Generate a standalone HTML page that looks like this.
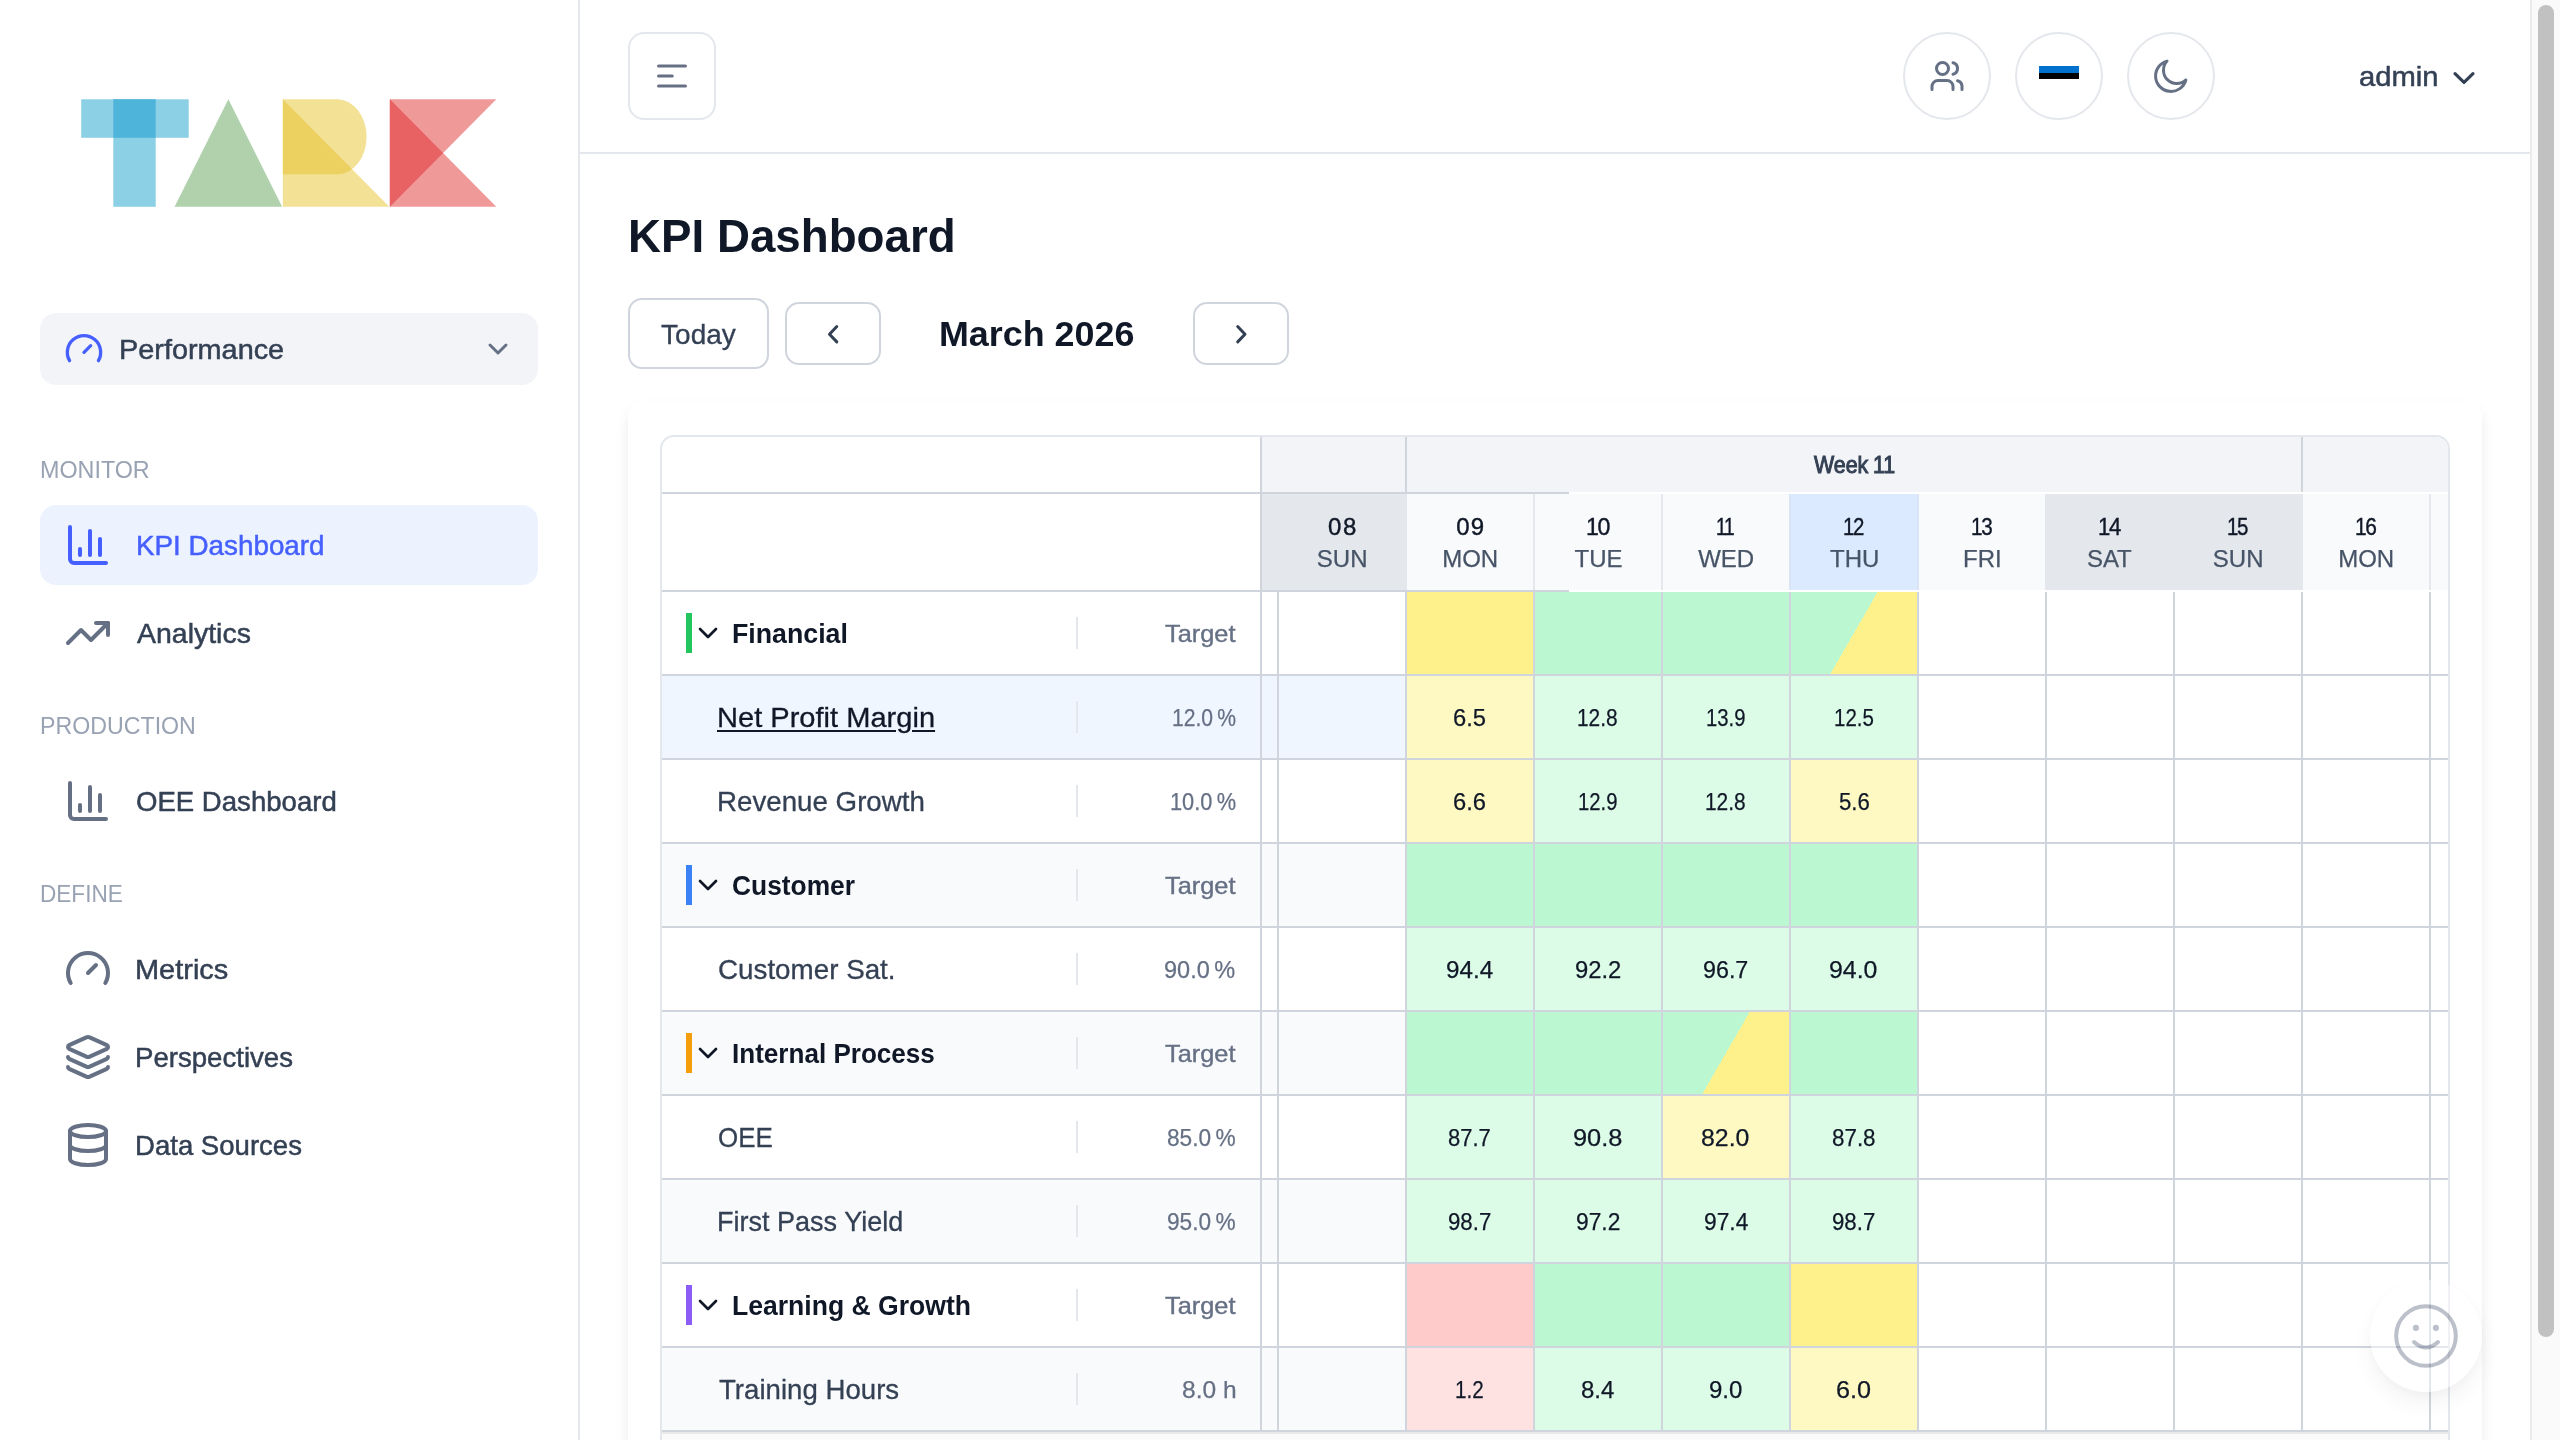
<!DOCTYPE html>
<html lang="en"><head><meta charset="utf-8"><title>KPI Dashboard</title>
<style>
html,body{margin:0;padding:0;}
body{width:2560px;height:1440px;overflow:hidden;background:#fff;position:relative;font-family:"Liberation Sans", sans-serif;}
.t{position:absolute;white-space:nowrap;line-height:1;font-family:"Liberation Sans", sans-serif;transform-origin:0 0;}
</style></head><body><div id="root" style="position:absolute;left:0;top:0;width:2560px;height:1440px;will-change:transform;">
<div style="position:absolute;left:578px;top:0px;width:2px;height:1440px;background:#e4e7ec;"></div>
<svg style="position:absolute;left:0;top:0" width="578" height="300" viewBox="0 0 578 300">
<g>
<rect x="81.2" y="99.3" width="107.5" height="38.5" fill="#8cd0e6"/>
<rect x="113.3" y="99.3" width="42.4" height="107.5" fill="#8cd0e6"/>
<rect x="113.3" y="99.3" width="42.4" height="38.5" fill="#4fb4da"/>
<polygon points="228.4,99.3 282.1,206.8 174.6,206.8" fill="#b1d1ad"/>
<path d="M282.8,99.3 H337.3 A29.3,37.5 0 0 1 337.3,174.3 H282.8 Z" fill="#f3e196"/>
<polygon points="282.8,99.3 389.3,206.8 282.8,206.8" fill="#f3e196"/>
<clipPath id="dclip"><path d="M282.8,99.3 H337.3 A29.3,37.5 0 0 1 337.3,174.3 H282.8 Z"/></clipPath>
<polygon points="282.8,99.3 389.3,206.8 282.8,206.8" fill="#ecd060" clip-path="url(#dclip)"/>
<polygon points="389.9,99.3 496.3,99.3 389.9,206.8" fill="#f09999"/>
<polygon points="389.9,99.3 496.3,206.8 389.9,206.8" fill="#f09999"/>
<polygon points="389.9,99.3 443.1,153.05 389.9,206.8" fill="#e86163"/>
</g></svg>
<div style="position:absolute;left:40px;top:313px;width:498px;height:72px;background:#f3f4f8;border-radius:16px;"></div>
<svg style="position:absolute;left:64px;top:329px;" width="40" height="40" viewBox="0 0 24 24" fill="none" stroke="#465fff" stroke-width="2" stroke-linecap="round" stroke-linejoin="round"><path d="m12 14 4-4"/><path d="M3.34 19a10 10 0 1 1 17.32 0"/></svg>
<svg style="position:absolute;left:482px;top:333px;" width="32" height="32" viewBox="0 0 24 24" fill="none" stroke="#667085" stroke-width="2.2" stroke-linecap="round" stroke-linejoin="round"><path d="m6 9 6 6 6-6"/></svg>
<div style="position:absolute;left:40px;top:505px;width:498px;height:80px;background:#ecf3ff;border-radius:16px;"></div>
<svg style="position:absolute;left:64px;top:521px;" width="48" height="48" viewBox="0 0 24 24" fill="none" stroke="#465fff" stroke-width="2" stroke-linecap="round" stroke-linejoin="round"><path d="M3 3v16a2 2 0 0 0 2 2h16"/><path d="M18 17V9"/><path d="M13 17V5"/><path d="M8 17v-3"/></svg>
<svg style="position:absolute;left:64px;top:609px;" width="48" height="48" viewBox="0 0 24 24" fill="none" stroke="#667085" stroke-width="2" stroke-linecap="round" stroke-linejoin="round"><polyline points="22 7 13.5 15.5 8.5 10.5 2 17"/><polyline points="16 7 22 7 22 13"/></svg>
<svg style="position:absolute;left:64px;top:777px;" width="48" height="48" viewBox="0 0 24 24" fill="none" stroke="#667085" stroke-width="2" stroke-linecap="round" stroke-linejoin="round"><path d="M3 3v16a2 2 0 0 0 2 2h16"/><path d="M18 17V9"/><path d="M13 17V5"/><path d="M8 17v-3"/></svg>
<svg style="position:absolute;left:64px;top:945px;" width="48" height="48" viewBox="0 0 24 24" fill="none" stroke="#667085" stroke-width="2" stroke-linecap="round" stroke-linejoin="round"><path d="m12 14 4-4"/><path d="M3.34 19a10 10 0 1 1 17.32 0"/></svg>
<svg style="position:absolute;left:64px;top:1033px;" width="48" height="48" viewBox="0 0 24 24" fill="none" stroke="#667085" stroke-width="2" stroke-linecap="round" stroke-linejoin="round"><path d="M12.83 2.18a2 2 0 0 0-1.66 0L2.6 6.08a1 1 0 0 0 0 1.83l8.58 3.91a2 2 0 0 0 1.66 0l8.58-3.9a1 1 0 0 0 0-1.83z"/><path d="M2 12a1 1 0 0 0 .58.91l8.6 3.91a2 2 0 0 0 1.65 0l8.58-3.9A1 1 0 0 0 22 12"/><path d="M2 17a1 1 0 0 0 .58.91l8.6 3.91a2 2 0 0 0 1.65 0l8.58-3.9A1 1 0 0 0 22 17"/></svg>
<svg style="position:absolute;left:64px;top:1121px;" width="48" height="48" viewBox="0 0 24 24" fill="none" stroke="#667085" stroke-width="2" stroke-linecap="round" stroke-linejoin="round"><ellipse cx="12" cy="5" rx="9" ry="3"/><path d="M3 5V19A9 3 0 0 0 21 19V5"/><path d="M3 12A9 3 0 0 0 21 12"/></svg>
<div style="position:absolute;left:580px;top:152px;width:1950px;height:2px;background:#e4e7ec;"></div>
<div style="position:absolute;left:628px;top:32px;width:88px;height:88px;background:#fff;box-sizing:border-box;border:2px solid #e4e7ec;border-radius:16px;"></div>
<svg style="position:absolute;left:628px;top:32px" width="88" height="88" viewBox="628 32 88 88" fill="none" stroke="#667085" stroke-width="3.2" stroke-linecap="round"><path d="M658.6 66H685.4M658.6 76H672.2M658.6 86H685.4"/></svg>
<div style="position:absolute;left:1903px;top:32px;width:88px;height:88px;background:#fff;box-sizing:border-box;border:2px solid #e4e7ec;border-radius:50%;"></div>
<div style="position:absolute;left:2015px;top:32px;width:88px;height:88px;background:#fff;box-sizing:border-box;border:2px solid #e4e7ec;border-radius:50%;"></div>
<div style="position:absolute;left:2127px;top:32px;width:88px;height:88px;background:#fff;box-sizing:border-box;border:2px solid #e4e7ec;border-radius:50%;"></div>
<svg style="position:absolute;left:1929px;top:58px;" width="36" height="36" viewBox="0 0 24 24" fill="none" stroke="#667085" stroke-width="2" stroke-linecap="round" stroke-linejoin="round"><path d="M16 21v-2a4 4 0 0 0-4-4H6a4 4 0 0 0-4 4v2"/><circle cx="9" cy="7" r="4"/><path d="M22 21v-2a4 4 0 0 0-3-3.870"/><path d="M16 3.13a4 4 0 0 1 0 7.75"/></svg>
<div style="position:absolute;left:2039px;top:66px;width:40px;height:6.67px;background:#0072ce;"></div>
<div style="position:absolute;left:2039px;top:72.67px;width:40px;height:6.66px;background:#000;"></div>
<svg style="position:absolute;left:2151px;top:56px" width="40" height="40" viewBox="0 0 20 20" fill="none" stroke="#667085" stroke-width="1.5" stroke-linejoin="round"><path d="M8.0306 2.5459A7.708 7.708 0 1 0 17.4547 11.97A6.668 6.668 0 0 1 8.0306 2.5459Z"/></svg>
<svg style="position:absolute;left:2440px;top:60px" width="48" height="36" viewBox="2440 60 48 36" fill="none" stroke="#344054" stroke-width="3.2" stroke-linecap="round" stroke-linejoin="round"><path d="M2455 73.6L2464 82.4L2473 73.6"/></svg>
<div style="position:absolute;left:628px;top:298px;width:141px;height:71px;background:#fff;box-sizing:border-box;border:2px solid #d0d5dd;border-radius:14px;"></div>
<div style="position:absolute;left:785px;top:302px;width:96px;height:63px;background:#fff;box-sizing:border-box;border:2px solid #d0d5dd;border-radius:14px;"></div>
<div style="position:absolute;left:1193px;top:302px;width:96px;height:63px;background:#fff;box-sizing:border-box;border:2px solid #d0d5dd;border-radius:14px;"></div>
<svg style="position:absolute;left:785px;top:302px" width="96" height="63" viewBox="785 302 96 63" fill="none" stroke="#344054" stroke-width="3" stroke-linecap="round" stroke-linejoin="round"><path d="M836.8 326.5L829.5 334.2L836.8 341.9"/></svg>
<svg style="position:absolute;left:1193px;top:302px" width="96" height="63" viewBox="1193 302 96 63" fill="none" stroke="#344054" stroke-width="3" stroke-linecap="round" stroke-linejoin="round"><path d="M1237.7 326.5L1245 334.2L1237.7 341.9"/></svg>
<div style="position:absolute;left:628px;top:401px;width:1854px;height:1100px;background:#fff;border-radius:16px;box-shadow:0 8px 16px -2px rgba(16,24,40,.10),0 4px 6px -2px rgba(16,24,40,.04);"></div>
<div style="position:absolute;left:660px;top:435px;width:1790px;height:1040px;box-sizing:border-box;border:2px solid #e4e7ec;border-radius:14px 14px 0 0;overflow:hidden;background:#fff;"><div style="position:absolute;left:-2px;top:-2px;width:1790px;height:1040px;"><div style="position:absolute;left:602px;top:2px;width:1186px;height:55px;background:#f2f4f7;"></div>
<div style="position:absolute;left:602px;top:59px;width:15px;height:96px;background:#e4e7ec;"></div>
<div style="position:absolute;left:617px;top:59px;width:2px;height:96px;background:#e4e7ec;"></div>
<div style="position:absolute;left:619px;top:59px;width:126px;height:96px;background:#e4e7ec;"></div>
<div style="position:absolute;left:745px;top:59px;width:2px;height:96px;background:#e4e7ec;"></div>
<div style="position:absolute;left:747px;top:59px;width:126px;height:96px;background:#f9fafb;"></div>
<div style="position:absolute;left:873px;top:59px;width:2px;height:96px;background:#e4e7ec;"></div>
<div style="position:absolute;left:875px;top:59px;width:126px;height:96px;background:#f9fafb;"></div>
<div style="position:absolute;left:1001px;top:59px;width:2px;height:96px;background:#e4e7ec;"></div>
<div style="position:absolute;left:1003px;top:59px;width:126px;height:96px;background:#f9fafb;"></div>
<div style="position:absolute;left:1129px;top:59px;width:2px;height:96px;background:#d9e4f6;"></div>
<div style="position:absolute;left:1131px;top:59px;width:126px;height:96px;background:#dbeafe;"></div>
<div style="position:absolute;left:1257px;top:59px;width:2px;height:96px;background:#d9e4f6;"></div>
<div style="position:absolute;left:1259px;top:59px;width:126px;height:96px;background:#f9fafb;"></div>
<div style="position:absolute;left:1385px;top:59px;width:2px;height:96px;background:#e4e7ec;"></div>
<div style="position:absolute;left:1387px;top:59px;width:126px;height:96px;background:#e4e7ec;"></div>
<div style="position:absolute;left:1513px;top:59px;width:2px;height:96px;background:#e4e7ec;"></div>
<div style="position:absolute;left:1515px;top:59px;width:126px;height:96px;background:#e4e7ec;"></div>
<div style="position:absolute;left:1641px;top:59px;width:2px;height:96px;background:#e4e7ec;"></div>
<div style="position:absolute;left:1643px;top:59px;width:126px;height:96px;background:#f9fafb;"></div>
<div style="position:absolute;left:1769px;top:59px;width:2px;height:96px;background:#e4e7ec;"></div>
<div style="position:absolute;left:1771px;top:59px;width:126px;height:96px;background:#f9fafb;"></div>
<div style="position:absolute;left:1897px;top:59px;width:2px;height:96px;background:#e4e7ec;"></div>
<div style="position:absolute;left:2px;top:57px;width:907px;height:2px;background:#d0d5dd;"></div>
<div style="position:absolute;left:909px;top:57px;width:879px;height:2px;background:#fff;"></div>
<div style="position:absolute;left:2px;top:155px;width:907px;height:2px;background:#d0d5dd;"></div>
<div style="position:absolute;left:909px;top:155px;width:879px;height:2px;background:#fff;"></div>
<div style="position:absolute;left:745px;top:2px;width:2px;height:55px;background:#d0d5dd;"></div>
<div style="position:absolute;left:1641px;top:2px;width:2px;height:55px;background:#d0d5dd;"></div>
<div style="position:absolute;left:2px;top:157px;width:745px;height:82px;background:#fff;"></div>
<div style="position:absolute;left:747px;top:157px;width:126px;height:82px;background:#fef08a;"></div>
<div style="position:absolute;left:875px;top:157px;width:126px;height:82px;background:#bbf7d0;"></div>
<div style="position:absolute;left:1003px;top:157px;width:126px;height:82px;background:#bbf7d0;"></div>
<div style="position:absolute;left:1131px;top:157px;width:126px;height:82px;background:linear-gradient(120deg,#bbf7d0 50%,#fef08a 50%);"></div>
<div style="position:absolute;left:2px;top:239px;width:1786px;height:2px;background:#d0d5dd;"></div>
<div style="position:absolute;left:416px;top:182px;width:2px;height:32px;background:#e4e7ec;"></div>
<div style="position:absolute;left:26px;top:178px;width:6px;height:40px;background:#22c55e;"></div>
<div style="position:absolute;left:2px;top:241px;width:745px;height:82px;background:#eff6ff;"></div>
<div style="position:absolute;left:747px;top:241px;width:126px;height:82px;background:#fef9c3;"></div>
<div style="position:absolute;left:875px;top:241px;width:126px;height:82px;background:#dcfce7;"></div>
<div style="position:absolute;left:1003px;top:241px;width:126px;height:82px;background:#dcfce7;"></div>
<div style="position:absolute;left:1131px;top:241px;width:126px;height:82px;background:#dcfce7;"></div>
<div style="position:absolute;left:2px;top:323px;width:1786px;height:2px;background:#d0d5dd;"></div>
<div style="position:absolute;left:416px;top:266px;width:2px;height:32px;background:#e4e7ec;"></div>
<div style="position:absolute;left:2px;top:325px;width:745px;height:82px;background:#fff;"></div>
<div style="position:absolute;left:747px;top:325px;width:126px;height:82px;background:#fef9c3;"></div>
<div style="position:absolute;left:875px;top:325px;width:126px;height:82px;background:#dcfce7;"></div>
<div style="position:absolute;left:1003px;top:325px;width:126px;height:82px;background:#dcfce7;"></div>
<div style="position:absolute;left:1131px;top:325px;width:126px;height:82px;background:#fef9c3;"></div>
<div style="position:absolute;left:2px;top:407px;width:1786px;height:2px;background:#d0d5dd;"></div>
<div style="position:absolute;left:416px;top:350px;width:2px;height:32px;background:#e4e7ec;"></div>
<div style="position:absolute;left:2px;top:409px;width:745px;height:82px;background:#f9fafb;"></div>
<div style="position:absolute;left:747px;top:409px;width:126px;height:82px;background:#bbf7d0;"></div>
<div style="position:absolute;left:875px;top:409px;width:126px;height:82px;background:#bbf7d0;"></div>
<div style="position:absolute;left:1003px;top:409px;width:126px;height:82px;background:#bbf7d0;"></div>
<div style="position:absolute;left:1131px;top:409px;width:126px;height:82px;background:#bbf7d0;"></div>
<div style="position:absolute;left:2px;top:491px;width:1786px;height:2px;background:#d0d5dd;"></div>
<div style="position:absolute;left:416px;top:434px;width:2px;height:32px;background:#e4e7ec;"></div>
<div style="position:absolute;left:26px;top:430px;width:6px;height:40px;background:#3b82f6;"></div>
<div style="position:absolute;left:2px;top:493px;width:745px;height:82px;background:#fff;"></div>
<div style="position:absolute;left:747px;top:493px;width:126px;height:82px;background:#dcfce7;"></div>
<div style="position:absolute;left:875px;top:493px;width:126px;height:82px;background:#dcfce7;"></div>
<div style="position:absolute;left:1003px;top:493px;width:126px;height:82px;background:#dcfce7;"></div>
<div style="position:absolute;left:1131px;top:493px;width:126px;height:82px;background:#dcfce7;"></div>
<div style="position:absolute;left:2px;top:575px;width:1786px;height:2px;background:#d0d5dd;"></div>
<div style="position:absolute;left:416px;top:518px;width:2px;height:32px;background:#e4e7ec;"></div>
<div style="position:absolute;left:2px;top:577px;width:745px;height:82px;background:#f9fafb;"></div>
<div style="position:absolute;left:747px;top:577px;width:126px;height:82px;background:#bbf7d0;"></div>
<div style="position:absolute;left:875px;top:577px;width:126px;height:82px;background:#bbf7d0;"></div>
<div style="position:absolute;left:1003px;top:577px;width:126px;height:82px;background:linear-gradient(120deg,#bbf7d0 50%,#fef08a 50%);"></div>
<div style="position:absolute;left:1131px;top:577px;width:126px;height:82px;background:#bbf7d0;"></div>
<div style="position:absolute;left:2px;top:659px;width:1786px;height:2px;background:#d0d5dd;"></div>
<div style="position:absolute;left:416px;top:602px;width:2px;height:32px;background:#e4e7ec;"></div>
<div style="position:absolute;left:26px;top:598px;width:6px;height:40px;background:#f59e0b;"></div>
<div style="position:absolute;left:2px;top:661px;width:745px;height:82px;background:#fff;"></div>
<div style="position:absolute;left:747px;top:661px;width:126px;height:82px;background:#dcfce7;"></div>
<div style="position:absolute;left:875px;top:661px;width:126px;height:82px;background:#dcfce7;"></div>
<div style="position:absolute;left:1003px;top:661px;width:126px;height:82px;background:#fef9c3;"></div>
<div style="position:absolute;left:1131px;top:661px;width:126px;height:82px;background:#dcfce7;"></div>
<div style="position:absolute;left:2px;top:743px;width:1786px;height:2px;background:#d0d5dd;"></div>
<div style="position:absolute;left:416px;top:686px;width:2px;height:32px;background:#e4e7ec;"></div>
<div style="position:absolute;left:2px;top:745px;width:745px;height:82px;background:#f9fafb;"></div>
<div style="position:absolute;left:747px;top:745px;width:126px;height:82px;background:#dcfce7;"></div>
<div style="position:absolute;left:875px;top:745px;width:126px;height:82px;background:#dcfce7;"></div>
<div style="position:absolute;left:1003px;top:745px;width:126px;height:82px;background:#dcfce7;"></div>
<div style="position:absolute;left:1131px;top:745px;width:126px;height:82px;background:#dcfce7;"></div>
<div style="position:absolute;left:2px;top:827px;width:1786px;height:2px;background:#d0d5dd;"></div>
<div style="position:absolute;left:416px;top:770px;width:2px;height:32px;background:#e4e7ec;"></div>
<div style="position:absolute;left:2px;top:829px;width:745px;height:82px;background:#fff;"></div>
<div style="position:absolute;left:747px;top:829px;width:126px;height:82px;background:#fecaca;"></div>
<div style="position:absolute;left:875px;top:829px;width:126px;height:82px;background:#bbf7d0;"></div>
<div style="position:absolute;left:1003px;top:829px;width:126px;height:82px;background:#bbf7d0;"></div>
<div style="position:absolute;left:1131px;top:829px;width:126px;height:82px;background:#fef08a;"></div>
<div style="position:absolute;left:2px;top:911px;width:1786px;height:2px;background:#d0d5dd;"></div>
<div style="position:absolute;left:416px;top:854px;width:2px;height:32px;background:#e4e7ec;"></div>
<div style="position:absolute;left:26px;top:850px;width:6px;height:40px;background:#8b5cf6;"></div>
<div style="position:absolute;left:2px;top:913px;width:745px;height:82px;background:#f9fafb;"></div>
<div style="position:absolute;left:747px;top:913px;width:126px;height:82px;background:#fee2e2;"></div>
<div style="position:absolute;left:875px;top:913px;width:126px;height:82px;background:#dcfce7;"></div>
<div style="position:absolute;left:1003px;top:913px;width:126px;height:82px;background:#dcfce7;"></div>
<div style="position:absolute;left:1131px;top:913px;width:126px;height:82px;background:#fef9c3;"></div>
<div style="position:absolute;left:2px;top:995px;width:1786px;height:2px;background:#d0d5dd;"></div>
<div style="position:absolute;left:416px;top:938px;width:2px;height:32px;background:#e4e7ec;"></div>
<div style="position:absolute;left:617px;top:157px;width:2px;height:840px;background:#d0d5dd;"></div>
<div style="position:absolute;left:745px;top:157px;width:2px;height:840px;background:#d0d5dd;"></div>
<div style="position:absolute;left:873px;top:157px;width:2px;height:840px;background:#d0d5dd;"></div>
<div style="position:absolute;left:1001px;top:157px;width:2px;height:840px;background:#d0d5dd;"></div>
<div style="position:absolute;left:1129px;top:157px;width:2px;height:840px;background:#d0d5dd;"></div>
<div style="position:absolute;left:1257px;top:157px;width:2px;height:840px;background:#d0d5dd;"></div>
<div style="position:absolute;left:1385px;top:157px;width:2px;height:840px;background:#d0d5dd;"></div>
<div style="position:absolute;left:1513px;top:157px;width:2px;height:840px;background:#d0d5dd;"></div>
<div style="position:absolute;left:1641px;top:157px;width:2px;height:840px;background:#d0d5dd;"></div>
<div style="position:absolute;left:1769px;top:157px;width:2px;height:840px;background:#d0d5dd;"></div>
<div style="position:absolute;left:1897px;top:157px;width:2px;height:840px;background:#d0d5dd;"></div>
<div style="position:absolute;left:600px;top:2px;width:2px;height:995px;background:#d0d5dd;"></div>
<div style="position:absolute;left:2px;top:997px;width:1786px;height:2px;background:#e9e9e9;"></div>
<div style="position:absolute;left:2px;top:999px;width:1786px;height:40px;background:#fafafa;"></div></div></div>
<svg style="position:absolute;left:692px;top:617px;" width="32" height="32" viewBox="0 0 24 24" fill="none" stroke="#101828" stroke-width="2" stroke-linecap="round" stroke-linejoin="round"><path d="m6 9 6 6 6-6"/></svg>
<svg style="position:absolute;left:692px;top:869px;" width="32" height="32" viewBox="0 0 24 24" fill="none" stroke="#101828" stroke-width="2" stroke-linecap="round" stroke-linejoin="round"><path d="m6 9 6 6 6-6"/></svg>
<svg style="position:absolute;left:692px;top:1037px;" width="32" height="32" viewBox="0 0 24 24" fill="none" stroke="#101828" stroke-width="2" stroke-linecap="round" stroke-linejoin="round"><path d="m6 9 6 6 6-6"/></svg>
<svg style="position:absolute;left:692px;top:1289px;" width="32" height="32" viewBox="0 0 24 24" fill="none" stroke="#101828" stroke-width="2" stroke-linecap="round" stroke-linejoin="round"><path d="m6 9 6 6 6-6"/></svg>
<div style="position:absolute;left:2370px;top:1280px;width:112px;height:112px;opacity:.43;"><div style="position:absolute;left:0;top:0;width:112px;height:112px;border-radius:50%;background:#fff;box-shadow:0 12px 24px rgba(16,24,40,.11),0 4px 8px rgba(16,24,40,.05);"></div><svg style="position:absolute;left:0;top:0" width="112" height="112" viewBox="0 0 112 112" fill="none" stroke="#667085" stroke-width="4" stroke-linecap="round"><circle cx="56" cy="56" r="29.8"/><circle cx="45.9" cy="47.9" r="3.05" fill="#667085" stroke="none"/><circle cx="65.9" cy="47.9" r="3.05" fill="#667085" stroke="none"/><path d="M44 62Q56 73 68 62"/></svg></div>
<div style="position:absolute;left:2530px;top:0px;width:30px;height:1440px;background:#fafafa;"></div>
<div style="position:absolute;left:2530px;top:0px;width:2px;height:1440px;background:#ebebeb;"></div>
<div style="position:absolute;left:2538px;top:5px;width:16px;height:1332px;background:#c1c1c1;border-radius:8px;"></div>
<span class="t" style="left:119.34px;top:336px;font-size:28px;font-weight:400;color:#344054;transform:scaleX(1.0303);-webkit-text-stroke:0.5px #344054;">Performance</span>
<span class="t" style="left:40.03px;top:458px;font-size:24px;font-weight:400;color:#98a2b3;transform:scaleX(0.9717);">MONITOR</span>
<span class="t" style="left:135.51px;top:532px;font-size:28px;font-weight:400;color:#465fff;transform:scaleX(0.9929);-webkit-text-stroke:0.5px #465fff;">KPI Dashboard</span>
<span class="t" style="left:137.10px;top:620px;font-size:28px;font-weight:400;color:#344054;transform:scaleX(1.0167);-webkit-text-stroke:0.5px #344054;">Analytics</span>
<span class="t" style="left:40.03px;top:714px;font-size:24px;font-weight:400;color:#98a2b3;transform:scaleX(0.9660);">PRODUCTION</span>
<span class="t" style="left:136.32px;top:788px;font-size:28px;font-weight:400;color:#344054;transform:scaleX(0.9845);-webkit-text-stroke:0.5px #344054;">OEE Dashboard</span>
<span class="t" style="left:40.06px;top:882px;font-size:24px;font-weight:400;color:#98a2b3;transform:scaleX(0.9407);">DEFINE</span>
<span class="t" style="left:135.23px;top:956px;font-size:28px;font-weight:400;color:#344054;transform:scaleX(1.0342);-webkit-text-stroke:0.5px #344054;">Metrics</span>
<span class="t" style="left:135.33px;top:1044px;font-size:28px;font-weight:400;color:#344054;transform:scaleX(0.9854);-webkit-text-stroke:0.5px #344054;">Perspectives</span>
<span class="t" style="left:135.33px;top:1132px;font-size:28px;font-weight:400;color:#344054;transform:scaleX(0.9842);-webkit-text-stroke:0.5px #344054;">Data Sources</span>
<span class="t" style="left:2359.06px;top:63px;font-size:28px;font-weight:400;color:#344054;transform:scaleX(1.0422);-webkit-text-stroke:0.5px #344054;">admin</span>
<span class="t" style="left:628.18px;top:212px;font-size:47px;font-weight:700;color:#101828;transform:scaleX(0.9726);">KPI Dashboard</span>
<span class="t" style="left:661.10px;top:321px;font-size:28px;font-weight:400;color:#344054;-webkit-text-stroke:0.3px #344054;">Today</span>
<span class="t" style="left:938.85px;top:316px;font-size:35px;font-weight:700;color:#101828;transform:scaleX(1.0244);">March 2026</span>
<span class="t" style="left:1813.60px;top:453px;font-size:24px;font-weight:400;color:#344054;transform:scaleX(0.8914);word-spacing:-1.5px;-webkit-text-stroke:1.0px #344054;">Week 11</span>
<span class="t" style="left:1328.00px;top:515px;font-size:24px;font-weight:400;color:#101828;letter-spacing:1.652px;-webkit-text-stroke:0.4px #101828;">08</span>
<span class="t" style="left:1316.83px;top:547px;font-size:24px;font-weight:400;color:#475467;-webkit-text-stroke:0.25px #475467;">SUN</span>
<span class="t" style="left:1456.25px;top:515px;font-size:24px;font-weight:400;color:#101828;letter-spacing:1.152px;-webkit-text-stroke:0.4px #101828;">09</span>
<span class="t" style="left:1442.17px;top:547px;font-size:24px;font-weight:400;color:#475467;-webkit-text-stroke:0.25px #475467;">MON</span>
<span class="t" style="left:1585.54px;top:515px;font-size:24px;font-weight:400;color:#101828;transform:scaleX(0.9645);letter-spacing:-1.500px;-webkit-text-stroke:0.4px #101828;">10</span>
<span class="t" style="left:1574.50px;top:547px;font-size:24px;font-weight:400;color:#475467;-webkit-text-stroke:0.25px #475467;">TUE</span>
<span class="t" style="left:1716.37px;top:515px;font-size:24px;font-weight:400;color:#101828;transform:scaleX(0.8000);letter-spacing:-1.500px;-webkit-text-stroke:0.4px #101828;">11</span>
<span class="t" style="left:1698.17px;top:547px;font-size:24px;font-weight:400;color:#475467;-webkit-text-stroke:0.25px #475467;">WED</span>
<span class="t" style="left:1843.00px;top:515px;font-size:24px;font-weight:400;color:#101828;transform:scaleX(0.8512);letter-spacing:-1.500px;-webkit-text-stroke:0.4px #101828;">12</span>
<span class="t" style="left:1830.00px;top:547px;font-size:24px;font-weight:400;color:#475467;-webkit-text-stroke:0.25px #475467;">THU</span>
<span class="t" style="left:1970.89px;top:515px;font-size:24px;font-weight:400;color:#101828;transform:scaleX(0.8596);letter-spacing:-1.500px;-webkit-text-stroke:0.4px #101828;">13</span>
<span class="t" style="left:1963.00px;top:547px;font-size:24px;font-weight:400;color:#475467;-webkit-text-stroke:0.25px #475467;">FRI</span>
<span class="t" style="left:2098.08px;top:515px;font-size:24px;font-weight:400;color:#101828;transform:scaleX(0.9225);letter-spacing:-1.500px;-webkit-text-stroke:0.4px #101828;">14</span>
<span class="t" style="left:2086.88px;top:547px;font-size:24px;font-weight:400;color:#475467;-webkit-text-stroke:0.25px #475467;">SAT</span>
<span class="t" style="left:2227.00px;top:515px;font-size:24px;font-weight:400;color:#101828;transform:scaleX(0.8512);letter-spacing:-1.500px;-webkit-text-stroke:0.4px #101828;">15</span>
<span class="t" style="left:2212.83px;top:547px;font-size:24px;font-weight:400;color:#475467;-webkit-text-stroke:0.25px #475467;">SUN</span>
<span class="t" style="left:2354.73px;top:515px;font-size:24px;font-weight:400;color:#101828;transform:scaleX(0.8722);letter-spacing:-1.500px;-webkit-text-stroke:0.4px #101828;">16</span>
<span class="t" style="left:2338.17px;top:547px;font-size:24px;font-weight:400;color:#475467;-webkit-text-stroke:0.25px #475467;">MON</span>
<span class="t" style="left:732.04px;top:620px;font-size:28px;font-weight:700;color:#101828;transform:scaleX(0.9550);">Financial</span>
<span class="t" style="left:1165.00px;top:622px;font-size:24px;font-weight:400;color:#667085;transform:scaleX(1.0562);-webkit-text-stroke:0.4px #667085;">Target</span>
<span class="t" style="left:716.82px;top:704px;font-size:28px;font-weight:400;color:#101828;transform:scaleX(1.0380);-webkit-text-stroke:0.3px #101828;text-decoration:underline;text-decoration-thickness:2px;text-underline-offset:3px;">Net Profit Margin</span>
<span class="t" style="left:1171.62px;top:706px;font-size:24px;font-weight:400;color:#667085;transform:scaleX(0.8798);word-spacing:-2px;-webkit-text-stroke:0.25px #667085;">12.0 %</span>
<span class="t" style="left:716.92px;top:788px;font-size:28px;font-weight:400;color:#344054;transform:scaleX(0.9894);-webkit-text-stroke:0.3px #344054;">Revenue Growth</span>
<span class="t" style="left:1169.59px;top:790px;font-size:24px;font-weight:400;color:#667085;transform:scaleX(0.9078);word-spacing:-2px;-webkit-text-stroke:0.25px #667085;">10.0 %</span>
<span class="t" style="left:732.06px;top:872px;font-size:28px;font-weight:700;color:#101828;transform:scaleX(0.9415);">Customer</span>
<span class="t" style="left:1165.00px;top:874px;font-size:24px;font-weight:400;color:#667085;transform:scaleX(1.0562);-webkit-text-stroke:0.4px #667085;">Target</span>
<span class="t" style="left:717.91px;top:956px;font-size:28px;font-weight:400;color:#344054;transform:scaleX(0.9922);-webkit-text-stroke:0.3px #344054;">Customer Sat.</span>
<span class="t" style="left:1164.42px;top:958px;font-size:24px;font-weight:400;color:#667085;transform:scaleX(0.9793);word-spacing:-2px;-webkit-text-stroke:0.25px #667085;">90.0 %</span>
<span class="t" style="left:732.07px;top:1040px;font-size:28px;font-weight:700;color:#101828;transform:scaleX(0.9311);">Internal Process</span>
<span class="t" style="left:1165.00px;top:1042px;font-size:24px;font-weight:400;color:#667085;transform:scaleX(1.0562);-webkit-text-stroke:0.4px #667085;">Target</span>
<span class="t" style="left:717.97px;top:1124px;font-size:28px;font-weight:400;color:#344054;transform:scaleX(0.9259);-webkit-text-stroke:0.3px #344054;">OEE</span>
<span class="t" style="left:1166.96px;top:1126px;font-size:24px;font-weight:400;color:#667085;transform:scaleX(0.9443);word-spacing:-2px;-webkit-text-stroke:0.25px #667085;">85.0 %</span>
<span class="t" style="left:716.97px;top:1208px;font-size:28px;font-weight:400;color:#344054;transform:scaleX(0.9653);-webkit-text-stroke:0.3px #344054;">First Pass Yield</span>
<span class="t" style="left:1166.96px;top:1210px;font-size:24px;font-weight:400;color:#667085;transform:scaleX(0.9443);word-spacing:-2px;-webkit-text-stroke:0.25px #667085;">95.0 %</span>
<span class="t" style="left:732.05px;top:1292px;font-size:28px;font-weight:700;color:#101828;transform:scaleX(0.9484);">Learning &amp; Growth</span>
<span class="t" style="left:1165.00px;top:1294px;font-size:24px;font-weight:400;color:#667085;transform:scaleX(1.0562);-webkit-text-stroke:0.4px #667085;">Target</span>
<span class="t" style="left:718.90px;top:1376px;font-size:28px;font-weight:400;color:#344054;transform:scaleX(0.9868);-webkit-text-stroke:0.3px #344054;">Training Hours</span>
<span class="t" style="left:1182.08px;top:1378px;font-size:24px;font-weight:400;color:#667085;transform:scaleX(1.0229);-webkit-text-stroke:0.25px #667085;">8.0 h</span>
<span class="t" style="left:1453.16px;top:706px;font-size:24px;font-weight:400;color:#101828;transform:scaleX(0.9901);-webkit-text-stroke:0.25px #101828;">6.5</span>
<span class="t" style="left:1577.38px;top:706px;font-size:24px;font-weight:400;color:#101828;transform:scaleX(0.8707);-webkit-text-stroke:0.25px #101828;">12.8</span>
<span class="t" style="left:1706.01px;top:706px;font-size:24px;font-weight:400;color:#101828;transform:scaleX(0.8443);-webkit-text-stroke:0.25px #101828;">13.9</span>
<span class="t" style="left:1833.80px;top:706px;font-size:24px;font-weight:400;color:#101828;transform:scaleX(0.8531);-webkit-text-stroke:0.25px #101828;">12.5</span>
<span class="t" style="left:1453.16px;top:790px;font-size:24px;font-weight:400;color:#101828;transform:scaleX(0.9901);-webkit-text-stroke:0.25px #101828;">6.6</span>
<span class="t" style="left:1578.01px;top:790px;font-size:24px;font-weight:400;color:#101828;transform:scaleX(0.8443);-webkit-text-stroke:0.25px #101828;">12.9</span>
<span class="t" style="left:1705.38px;top:790px;font-size:24px;font-weight:400;color:#101828;transform:scaleX(0.8707);-webkit-text-stroke:0.25px #101828;">12.8</span>
<span class="t" style="left:1838.75px;top:790px;font-size:24px;font-weight:400;color:#101828;transform:scaleX(0.9238);-webkit-text-stroke:0.25px #101828;">5.6</span>
<span class="t" style="left:1446.09px;top:958px;font-size:24px;font-weight:400;color:#101828;transform:scaleX(1.0096);-webkit-text-stroke:0.25px #101828;">94.4</span>
<span class="t" style="left:1574.51px;top:958px;font-size:24px;font-weight:400;color:#101828;transform:scaleX(0.9920);-webkit-text-stroke:0.25px #101828;">92.2</span>
<span class="t" style="left:1703.03px;top:958px;font-size:24px;font-weight:400;color:#101828;transform:scaleX(0.9699);-webkit-text-stroke:0.25px #101828;">96.7</span>
<span class="t" style="left:1829.46px;top:958px;font-size:24px;font-weight:400;color:#101828;transform:scaleX(1.0361);-webkit-text-stroke:0.25px #101828;">94.0</span>
<span class="t" style="left:1448.34px;top:1126px;font-size:24px;font-weight:400;color:#101828;transform:scaleX(0.9148);-webkit-text-stroke:0.25px #101828;">87.7</span>
<span class="t" style="left:1572.94px;top:1126px;font-size:24px;font-weight:400;color:#101828;transform:scaleX(1.0581);-webkit-text-stroke:0.25px #101828;">90.8</span>
<span class="t" style="left:1701.46px;top:1126px;font-size:24px;font-weight:400;color:#101828;transform:scaleX(1.0361);-webkit-text-stroke:0.25px #101828;">82.0</span>
<span class="t" style="left:1831.92px;top:1126px;font-size:24px;font-weight:400;color:#101828;transform:scaleX(0.9325);-webkit-text-stroke:0.25px #101828;">87.8</span>
<span class="t" style="left:1448.07px;top:1210px;font-size:24px;font-weight:400;color:#101828;transform:scaleX(0.9259);-webkit-text-stroke:0.25px #101828;">98.7</span>
<span class="t" style="left:1575.55px;top:1210px;font-size:24px;font-weight:400;color:#101828;transform:scaleX(0.9479);-webkit-text-stroke:0.25px #101828;">97.2</span>
<span class="t" style="left:1703.55px;top:1210px;font-size:24px;font-weight:400;color:#101828;transform:scaleX(0.9479);-webkit-text-stroke:0.25px #101828;">97.4</span>
<span class="t" style="left:1832.07px;top:1210px;font-size:24px;font-weight:400;color:#101828;transform:scaleX(0.9259);-webkit-text-stroke:0.25px #101828;">98.7</span>
<span class="t" style="left:1455.39px;top:1378px;font-size:24px;font-weight:400;color:#101828;transform:scaleX(0.8590);-webkit-text-stroke:0.25px #101828;">1.2</span>
<span class="t" style="left:1581.00px;top:1378px;font-size:24px;font-weight:400;color:#101828;-webkit-text-stroke:0.25px #101828;">8.4</span>
<span class="t" style="left:1709.00px;top:1378px;font-size:24px;font-weight:400;color:#101828;-webkit-text-stroke:0.25px #101828;">9.0</span>
<span class="t" style="left:1836.15px;top:1378px;font-size:24px;font-weight:400;color:#101828;transform:scaleX(1.0495);-webkit-text-stroke:0.25px #101828;">6.0</span>
</div></body></html>
